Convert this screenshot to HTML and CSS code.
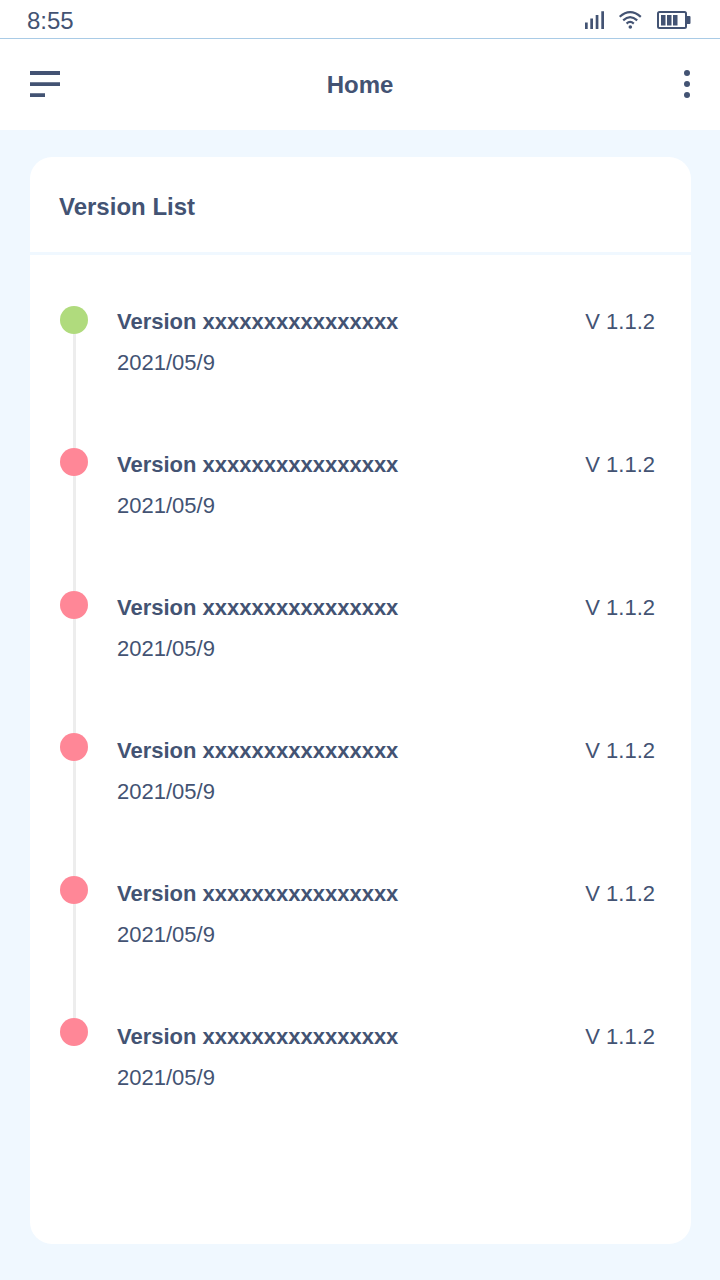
FILE: index.html
```html
<!DOCTYPE html>
<html lang="en">
<head>
<meta charset="utf-8">
<meta name="viewport" content="width=device-width, initial-scale=1">
<title>Home</title>
<link rel="stylesheet" href="styles.css">
</head>
<body>
<div class="status">
  <time class="clock">8:55</time>
  <div class="indicators">
    <svg width="20" height="20" viewBox="0 0 20 20" fill="currentColor" aria-hidden="true">
      <path d="M0 12.500h2.700v6.500H0zM5.300 8.500h2.700v10.500h-2.700zM10.700 5h2.700v14h-2.700zM16.300 1.200h2.700v17.800h-2.700z"/>
    </svg>
    <svg class="wifi" width="24" height="20" viewBox="0 0 24 20" fill="none" stroke="currentColor" stroke-width="2.200" aria-hidden="true">
      <path d="M1.700 6.800Q12-2.500 22.800 6.800M5.200 10.400Q12 4 19.200 10.400M8.600 13.600Q12 10.300 15.800 13.600"/>
      <circle cx="12.300" cy="17" r="1.800" fill="currentColor" stroke="none"/>
    </svg>
    <svg class="battery" width="34" height="20" viewBox="0 0 34 20" fill="currentColor" aria-hidden="true">
      <rect x="1" y="2" width="28" height="16" rx="1.500" fill="none" stroke="currentColor" stroke-width="2"/>
      <path d="M4 5h4.500v10.500H4zM10 5h4.500v10.500h-4.500zM16 5h4.500v10.500H16zM30 6h2.500q1 0 1 1v6q0 1-1 1H30z"/>
    </svg>
  </div>
</div>
<header class="topbar">
  <button class="icon-button" type="button" aria-label="Menu">
    <svg width="30" height="28" viewBox="0 0 30 28" fill="currentColor" aria-hidden="true">
      <path d="M0 1h30v4H0zM0 12.200h30v3.800H0zM0 23.200h15v3.800H0z"/>
    </svg>
  </button>
  <h1 class="page-title">Home</h1>
  <button class="icon-button icon-button-end" type="button" aria-label="More options">
    <svg width="6" height="28" viewBox="0 0 6 28" fill="currentColor" aria-hidden="true">
      <circle cx="3" cy="3" r="3"/><circle cx="3" cy="14" r="3"/><circle cx="3" cy="25" r="3"/>
    </svg>
  </button>
</header>
<main class="content">
  <section class="card">
    <h2 class="card-title">Version List</h2>
    <div class="timeline">
      <div class="rail" aria-hidden="true">
        <span class="dot dot-current"></span><span class="line"></span>
        <span class="dot"></span><span class="line"></span>
        <span class="dot"></span><span class="line"></span>
        <span class="dot"></span><span class="line"></span>
        <span class="dot"></span><span class="line"></span>
        <span class="dot"></span>
      </div>
      <ol class="versions">
        <li class="version"><div class="details"><h3 class="name">Version xxxxxxxxxxxxxxxx</h3><time>2021/05/9</time></div><span>V 1.1.2</span></li>
        <li class="version"><div class="details"><h3 class="name">Version xxxxxxxxxxxxxxxx</h3><time>2021/05/9</time></div><span>V 1.1.2</span></li>
        <li class="version"><div class="details"><h3 class="name">Version xxxxxxxxxxxxxxxx</h3><time>2021/05/9</time></div><span>V 1.1.2</span></li>
        <li class="version"><div class="details"><h3 class="name">Version xxxxxxxxxxxxxxxx</h3><time>2021/05/9</time></div><span>V 1.1.2</span></li>
        <li class="version"><div class="details"><h3 class="name">Version xxxxxxxxxxxxxxxx</h3><time>2021/05/9</time></div><span>V 1.1.2</span></li>
        <li class="version"><div class="details"><h3 class="name">Version xxxxxxxxxxxxxxxx</h3><time>2021/05/9</time></div><span>V 1.1.2</span></li>
      </ol>
    </div>
  </section>
</main>
</body>
</html>
```
FILE: styles.css
```css
* {
  box-sizing: border-box;
}

body {
  display: flex;
  flex-direction: column;
  min-height: 100vh;
  margin: 0;
  background: #f0f8ff;
  color: #435373;
  font-family: "Liberation Sans", Arial, sans-serif;
  font-size: 22px;
  line-height: 30px;
}

h1,
h2,
h3 {
  margin: 0;
  font-weight: 700;
}

svg {
  display: block;
}

.status {
  display: flex;
  align-items: center;
  justify-content: space-between;
  padding: 4px 29px 2px 27px;
  border-bottom: 1px solid #a9cbe6;
  background: #fff;
}

.clock {
  padding-top: 2px;
  font-size: 24px;
}

.indicators {
  display: flex;
  align-items: center;
}

.wifi {
  margin-left: 13px;
}

.battery {
  margin-left: 15px;
}

.topbar {
  display: grid;
  grid-template-columns: 1fr auto 1fr;
  align-items: center;
  padding: 29px 30px 30px;
  background: #fff;
}

.page-title {
  padding-top: 2px;
  font-size: 24px;
}

.icon-button {
  justify-self: start;
  padding: 0;
  border: 0;
  background: none;
  color: inherit;
  cursor: pointer;
}

.icon-button-end {
  justify-self: end;
}

.content {
  display: flex;
  flex: 1;
  padding: 27px 29px 36px 30px;
}

.card {
  flex: 1;
  border-radius: 22px;
  background: #fff;
}

.card-title {
  padding: 35px 29px 30px;
  border-bottom: 3px solid #f0f8ff;
  font-size: 24px;
}

.timeline {
  display: flex;
  gap: 29px;
  padding: 51px 36px 51px 30px;
  line-height: 32px;
}

.rail {
  display: flex;
  flex-direction: column;
  align-items: center;
  margin-bottom: 48px;
}

.dot {
  width: 28px;
  height: 28px;
  border-radius: 50%;
  background: #ff8797;
}

.dot-current {
  background: #b0db7d;
}

.line {
  flex: 1;
  width: 3px;
  background: #ededed;
}

.versions {
  display: flex;
  flex: 1;
  flex-direction: column;
  gap: 70px;
  margin: 0;
  padding: 0;
  list-style: none;
}

.version {
  display: flex;
  justify-content: space-between;
}

.details {
  display: flex;
  flex-direction: column;
  gap: 9px;
}

.name {
  font-size: 22px;
}
```
